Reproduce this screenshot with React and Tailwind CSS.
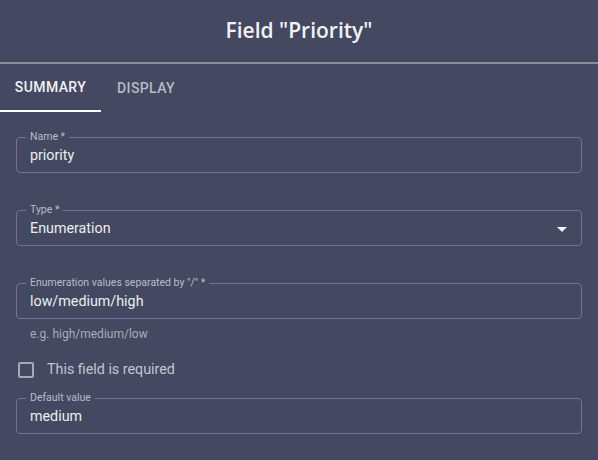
import React from 'react';

function OutlinedField({ label, value, children }) {
  return (
    <fieldset className="border border-[#6f7490] rounded-[4px] px-[13px] pb-0 m-0 min-w-0">
      <legend className="-ml-1 px-1 text-[10.5px] leading-[12px] text-[#b9bccb]">{label}</legend>
      <div className="-mt-1 h-[33px] flex items-center justify-between text-[14.3px] text-[#eceef3]">
        <span>{value}</span>
        {children}
      </div>
    </fieldset>
  );
}

export default function App() {
  return (
    <div className="w-[598px] h-[460px] bg-[#444860] overflow-hidden" style={{ fontFamily: 'Roboto, "Liberation Sans", sans-serif' }}>
      <div className="h-[62px] flex items-center justify-center">
        <h1 className="text-[21px] font-semibold text-[#f1f2f6]" style={{ fontFamily: '"Open Sans", "Noto Sans", sans-serif' }}>
          Field "Priority"
        </h1>
      </div>
      <div className="h-[2px] bg-[#8d8f99]" />

      <div className="flex h-[48px]">
        <div className="w-[101px] flex flex-col">
          <div className="flex-1 flex items-center justify-center text-[14px] font-medium tracking-[0.4px] text-[#f1f2f6]">SUMMARY</div>
          <div className="h-[2px] bg-white" />
        </div>
        <div className="px-4 flex items-center text-[14px] font-medium tracking-[0.4px] text-[#b7bac8]">DISPLAY</div>
      </div>

      <div className="px-4 pt-[19px] flex flex-col">
        <OutlinedField label="Name *" value="priority" />
        <div className="h-[31px]" />
        <OutlinedField label="Type *" value="Enumeration">
          <svg width="24" height="24" viewBox="0 0 24 24" className="-mr-[6px] fill-[#f1f2f6]">
            <path d="M7 10l5 5 5-5z" />
          </svg>
        </OutlinedField>
        <div className="h-[31px]" />
        <OutlinedField label={'Enumeration values separated by "/" *'} value="low/medium/high" />
        <div className="pl-[14px] pt-[7px] text-[12px] leading-[16px] text-[#a9acbc]">e.g. high/medium/low</div>
        <label className="flex items-center h-[40px] mt-[8px]">
          <span className="ml-[2px] w-[16px] h-[16px] border-2 border-[#a6a9b9] rounded-[2px]" />
          <span className="ml-[13px] text-[14.3px] text-[#c3c6d2]">This field is required</span>
        </label>
        <div className="h-[2px]" />
        <OutlinedField label="Default value" value="medium" />
      </div>
    </div>
  );
}
